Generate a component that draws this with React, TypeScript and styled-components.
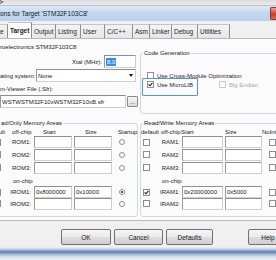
import styled, { createGlobalStyle } from 'styled-components';

const Global = createGlobalStyle`
  html, body {
    margin: 0;
    padding: 0;
    overflow: hidden;
  }
  body {
    width: 276px;
    height: 260px;
    background: #f0f0f0;
    font-family: "Liberation Sans", Arial, sans-serif;
    font-size: 6px;
    color: #222;
  }
`;

const Window = styled.div`
  width: 276px;
  height: 260px;
  display: flex;
  flex-direction: column;
  overflow: hidden;
`;

const TopStrip = styled.div`
  height: 5px;
  background: linear-gradient(#dcdcdc, #ececec);
  border-bottom: 1px solid #b8c4d2;
  display: flex;
`;

const Corner = styled.div`
  width: 4px;
  height: 4px;
  background: #6b6b6b;
  clip-path: polygon(0 0, 100% 50%, 0 100%, 0 70%, 50% 50%, 0 30%);
`;

const TitleBar = styled.div`
  height: 15px;
  display: flex;
  align-items: center;
  background: linear-gradient(#dfeaf7, #c3d8f0 45%, #b9d1ec);
`;

const TitleText = styled.span`
  font-size: 6.5px;
  color: #1b1b1b;
  white-space: nowrap;
`;

const CloseButton = styled.div`
  margin-left: auto;
  width: 5px;
  height: 11px;
  border-radius: 2px 0 0 2px;
  background: linear-gradient(#e8a49a, #c7402c 55%, #d56a4f);
  border: 1px solid #8a3a2e;
  border-right: none;
`;

const Body = styled.div`
  flex: 1;
  display: flex;
  flex-direction: column;
  background: #f0f0f0;
`;

const TabStrip = styled.div`
  height: 17px;
  display: flex;
  align-items: flex-end;
`;

const Tab = styled.div<{ $w: number; $active?: boolean }>`
  width: ${(p) => p.$w}px;
  height: ${(p) => (p.$active ? 16 : 14)}px;
  box-sizing: border-box;
  padding-left: 2px;
  display: flex;
  align-items: center;
  font-size: 6.5px;
  white-space: nowrap;
  overflow: hidden;
  color: #1f1f1f;
  background: ${(p) => (p.$active ? '#fbfbfb' : 'linear-gradient(#f4f4f4, #e6e6e6)')};
  border-top: 1px solid #c4c4c4;
  border-right: 1px solid #8c8e94;
  font-weight: ${(p) => (p.$active ? 'bold' : 'normal')};
  &:first-child {
    padding-left: 0;
  }
`;

const TabPage = styled.div`
  height: 183px;
  box-sizing: border-box;
  background: #fbfbfb;
  border-top: 1px solid #b9b9b9;
  border-bottom: 1px solid #b9b9b9;
  display: flex;
  flex-direction: column;
`;

const TopSection = styled.div`
  height: 78px;
  display: flex;
  align-items: flex-start;
`;

const LeftFields = styled.div`
  width: 138px;
  display: flex;
  flex-direction: column;
`;

const Line = styled.div<{ $mt: number }>`
  height: 8px;
  line-height: 8px;
  margin-top: ${(p) => p.$mt}px;
  white-space: nowrap;
`;

const FieldRow = styled.div<{ $mt: number }>`
  display: flex;
  align-items: center;
  height: 13px;
  margin-top: ${(p) => p.$mt}px;
`;

const RowLabel = styled.span<{ $w: number }>`
  width: ${(p) => p.$w}px;
  flex-shrink: 0;
  white-space: nowrap;
  text-align: right;
  padding-right: 2px;
  box-sizing: border-box;
`;

const TextBox = styled.div<{ $w: number; $h?: number }>`
  width: ${(p) => p.$w}px;
  height: ${(p) => p.$h ?? 12}px;
  box-sizing: border-box;
  background: #fff;
  border: 1px solid;
  border-color: #8f8f8f #cfcfcf #cfcfcf #9a9a9a;
  display: flex;
  align-items: center;
  padding-left: 1px;
  white-space: nowrap;
  overflow: hidden;
  color: #1a1a1a;
`;

const Selected = styled.span`
  background: #3a8ee6;
  color: #fff;
  padding: 0 1px;
  line-height: 8px;
`;

const Select = styled(TextBox)`
  justify-content: space-between;
  padding-right: 0;
`;

const DropArrow = styled.div`
  width: 9px;
  height: 10px;
  display: flex;
  align-items: center;
  justify-content: center;
  &::after {
    content: '';
    border-left: 2.5px solid transparent;
    border-right: 2.5px solid transparent;
    border-top: 3px solid #111;
  }
`;

const SmallButton = styled.div`
  width: 11px;
  height: 11px;
  margin-left: 1px;
  box-sizing: border-box;
  border: 1px solid #8a8a8a;
  border-radius: 1px;
  background: linear-gradient(#f6f6f6, #dcdcdc);
  display: flex;
  align-items: flex-end;
  justify-content: center;
  line-height: 7px;
  font-size: 6px;
`;

const Group = styled.fieldset<{ $w: number; $ml: number; $h: number }>`
  position: relative;
  margin: 0 0 0 ${(p) => p.$ml}px;
  padding: 0;
  width: ${(p) => p.$w}px;
  height: ${(p) => p.$h}px;
  box-sizing: border-box;
  flex-shrink: 0;
  border: 1px solid #d2d8de;
  border-radius: 3px;
  min-width: 0;
`;

const Legend = styled.legend<{ $ml: number }>`
  margin-left: ${(p) => p.$ml}px;
  padding: 0 1px;
  height: 8px;
  line-height: 8px;
  white-space: nowrap;
`;

const CheckRow = styled.div<{ $mt?: number }>`
  display: flex;
  align-items: center;
  height: 9px;
  margin-top: ${(p) => p.$mt ?? 0}px;
  padding-left: 6px;
`;

const CheckItem = styled.div<{ $w?: number; $off?: boolean }>`
  display: flex;
  align-items: center;
  gap: 3px;
  width: ${(p) => (p.$w ? `${p.$w}px` : 'auto')};
  color: ${(p) => (p.$off ? '#a8a8a8' : '#1c1c1c')};
  white-space: nowrap;
  flex-shrink: 0;
`;

const Box = styled.div<{ $checked?: boolean; $off?: boolean }>`
  width: 7px;
  height: 7px;
  box-sizing: border-box;
  flex-shrink: 0;
  background: #fff;
  border: 1px solid ${(p) => (p.$off ? '#c9c9c9' : '#8e8f8f')};
  display: flex;
  align-items: center;
  justify-content: center;
`;

const Highlight = styled.div`
  position: absolute;
  left: 1px;
  top: 21px;
  width: 56px;
  height: 18px;
  box-sizing: border-box;
  border: 1.5px solid #5b8fe0;
  border-radius: 1px;
`;

const MemorySection = styled.div`
  display: flex;
  margin-top: 2px;
`;

const MemGrid = styled.div<{ $cols: string }>`
  display: grid;
  grid-template-columns: ${(p) => p.$cols};
  grid-template-rows: 9px 12px 13px 13px 13px 10px 13px 13px;
  align-items: center;
`;

const Cell = styled.div<{ $ml?: number; $mr?: number; $end?: boolean }>`
  justify-self: ${(p) => (p.$end ? 'end' : 'start')};
  margin-left: ${(p) => p.$ml ?? 0}px;
  margin-right: ${(p) => p.$mr ?? 0}px;
  white-space: nowrap;
  display: flex;
  align-items: center;
`;

const Radio = styled.div<{ $on?: boolean }>`
  width: 6px;
  height: 6px;
  box-sizing: border-box;
  border-radius: 50%;
  border: 1px solid #8e8f8f;
  background: #fff;
  display: flex;
  align-items: center;
  justify-content: center;
  &::after {
    content: '';
    display: ${(p) => (p.$on ? 'block' : 'none')};
    width: 2px;
    height: 2px;
    border-radius: 50%;
    background: #222;
  }
`;

const ButtonRow = styled.div`
  display: flex;
  margin-top: 8px;
  padding-left: 61px;
`;

const Button = styled.div<{ $w: number; $ml: number }>`
  width: ${(p) => p.$w}px;
  height: 16px;
  margin-left: ${(p) => p.$ml}px;
  flex-shrink: 0;
  box-sizing: border-box;
  border: 1px solid #707070;
  border-radius: 2px;
  background: linear-gradient(#f4f4f4, #ebebeb 50%, #dddddd 51%, #d0d0d0);
  display: flex;
  align-items: center;
  justify-content: center;
  font-size: 6.5px;
  color: #1a1a1a;
`;

const BottomFrame = styled.div`
  height: 13px;
  background: linear-gradient(#f0f0f0 0, #c9d6e6 2px, #7f9cc6 4px, #5e7fae 5px, #9ab3d4 7px, #d7e1ec 10px, #eef2f6 13px);
`;

function Check({ checked, off }: { checked?: boolean; off?: boolean }) {
  return (
    <Box $checked={checked} $off={off}>
      {checked && (
        <svg width="5" height="5" viewBox="0 0 5 5">
          <path d="M0.6 2.4 L2 3.8 L4.4 0.8" fill="none" stroke="#1a1a1a" strokeWidth="1.1" />
        </svg>
      )}
    </Box>
  );
}

const tabs = [
  { label: 'e', w: 8 },
  { label: 'Target', w: 24, active: true },
  { label: 'Output', w: 24 },
  { label: 'Listing', w: 25 },
  { label: 'User', w: 24 },
  { label: 'C/C++', w: 28 },
  { label: 'Asm', w: 17 },
  { label: 'Linker', w: 22 },
  { label: 'Debug', w: 26 },
  { label: 'Utilities', w: 32 },
];

const romRows = [
  { name: 'ROM1:', start: '', size: '' },
  { name: 'ROM2:', start: '', size: '' },
  { name: 'ROM3:', start: '', size: '' },
  null,
  { name: 'IROM1:', start: '0x8000000', size: '0x10000', on: true },
  { name: 'IROM2:', start: '', size: '' },
];

const ramRows = [
  { name: 'RAM1:', start: '', size: '' },
  { name: 'RAM2:', start: '', size: '' },
  { name: 'RAM3:', start: '', size: '' },
  null,
  { name: 'IRAM1:', start: '0x20000000', size: '0x5000', on: true },
  { name: 'IRAM2:', start: '', size: '' },
];

export default function App() {
  return (
    <Window>
      <Global />
      <TopStrip>
        <Corner />
      </TopStrip>
      <TitleBar>
        <TitleText>ons for Target 'STM32F103C8'</TitleText>
        <CloseButton />
      </TitleBar>
      <Body>
        <TabStrip>
          {tabs.map((t) => (
            <Tab key={t.label} $w={t.w} $active={t.active}>
              {t.label}
            </Tab>
          ))}
        </TabStrip>
        <TabPage>
          <TopSection>
            <LeftFields>
              <Line $mt={4}>roelectronics STM32F103C8</Line>
              <FieldRow $mt={4}>
                <RowLabel $w={104}>Xtal (MHz):</RowLabel>
                <TextBox $w={32} $h={13}>
                  <Selected>8.0</Selected>
                </TextBox>
              </FieldRow>
              <FieldRow $mt={1}>
                <RowLabel $w={36} style={{ textAlign: 'left' }}>ating system:</RowLabel>
                <Select $w={100} $h={13}>
                  None
                  <DropArrow />
                </Select>
              </FieldRow>
              <Line $mt={3}>m-Viewer File (.Sfr):</Line>
              <FieldRow $mt={2}>
                <TextBox $w={126} $h={13}>WSTWSTM32F10xWSTM32F10xB.sfr</TextBox>
                <SmallButton>...</SmallButton>
              </FieldRow>
            </LeftFields>
            <Group $w={150} $ml={2} $h={65} style={{ marginTop: 10 }}>
              <Legend $ml={2}>Code Generation</Legend>
              <CheckRow $mt={14}>
                <CheckItem>
                  <Check />
                  Use Cross-Module Optimization
                </CheckItem>
              </CheckRow>
              <CheckRow>
                <CheckItem $w={72}>
                  <Check checked />
                  Use MicroLIB
                </CheckItem>
                <CheckItem $off>
                  <Check off />
                  Big Endian
                </CheckItem>
              </CheckRow>
              <Highlight />
            </Group>
          </TopSection>
          <MemorySection>
            <Group $w={142} $ml={-4} $h={98}>
              <Legend $ml={3}>ad/Only Memory Areas</Legend>
              <MemGrid $cols="13px 23px 40px 40px 24px">
                <Cell $end $mr={5}>ult</Cell>
                <Cell $ml={2}>off-chip</Cell>
                <Cell $ml={10}>Start</Cell>
                <Cell $ml={12}>Size</Cell>
                <Cell $ml={5}>Startup</Cell>
                {romRows.map((r, i) =>
                  r ? (
                    [
                      <Cell key={`d${i}`} $end $mr={9}>
                        <Check checked={r.on} />
                      </Cell>,
                      <Cell key={`n${i}`} $end $mr={2}>{r.name}</Cell>,
                      <Cell key={`s${i}`} $ml={1}>
                        <TextBox $w={38}>{r.start}</TextBox>
                      </Cell>,
                      <Cell key={`z${i}`} $ml={1}>
                        <TextBox $w={38}>{r.size}</TextBox>
                      </Cell>,
                      <Cell key={`r${i}`} $ml={6}>
                        <Radio $on={r.on} />
                      </Cell>,
                    ]
                  ) : (
                    [
                      <Cell key={`e${i}`} />,
                      <Cell key={`o${i}`} $ml={3}>on-chip</Cell>,
                      <Cell key={`f${i}`} />,
                      <Cell key={`g${i}`} />,
                      <Cell key={`h${i}`} />,
                    ]
                  )
                )}
              </MemGrid>
            </Group>
            <Group $w={150} $ml={2} $h={98}>
              <Legend $ml={2}>Read/Write Memory Areas</Legend>
              <MemGrid $cols="20px 20px 43px 38px 36px">
                <Cell>default</Cell>
                <Cell>off-chip</Cell>
                <Cell>Start</Cell>
                <Cell $ml={1}>Size</Cell>
                <Cell>NoInit</Cell>
                {ramRows.map((r, i) =>
                  r ? (
                    [
                      <Cell key={`d${i}`} $ml={2}>
                        <Check checked={r.on} />
                      </Cell>,
                      <Cell key={`n${i}`} $end $mr={1}>{r.name}</Cell>,
                      <Cell key={`s${i}`} $ml={1}>
                        <TextBox $w={41}>{r.start}</TextBox>
                      </Cell>,
                      <Cell key={`z${i}`} $ml={1}>
                        <TextBox $w={37}>{r.size}</TextBox>
                      </Cell>,
                      <Cell key={`r${i}`} $ml={7}>
                        <Check />
                      </Cell>,
                    ]
                  ) : (
                    [
                      <Cell key={`e${i}`} />,
                      <Cell key={`o${i}`} $ml={1}>on-chip</Cell>,
                      <Cell key={`f${i}`} />,
                      <Cell key={`g${i}`} />,
                      <Cell key={`h${i}`} />,
                    ]
                  )
                )}
              </MemGrid>
            </Group>
          </MemorySection>
        </TabPage>
        <ButtonRow>
          <Button $w={50} $ml={0}>OK</Button>
          <Button $w={49} $ml={3}>Cancel</Button>
          <Button $w={47} $ml={3}>Defaults</Button>
          <Button $w={40} $ml={35}>Help</Button>
        </ButtonRow>
      </Body>
      <BottomFrame />
    </Window>
  );
}
